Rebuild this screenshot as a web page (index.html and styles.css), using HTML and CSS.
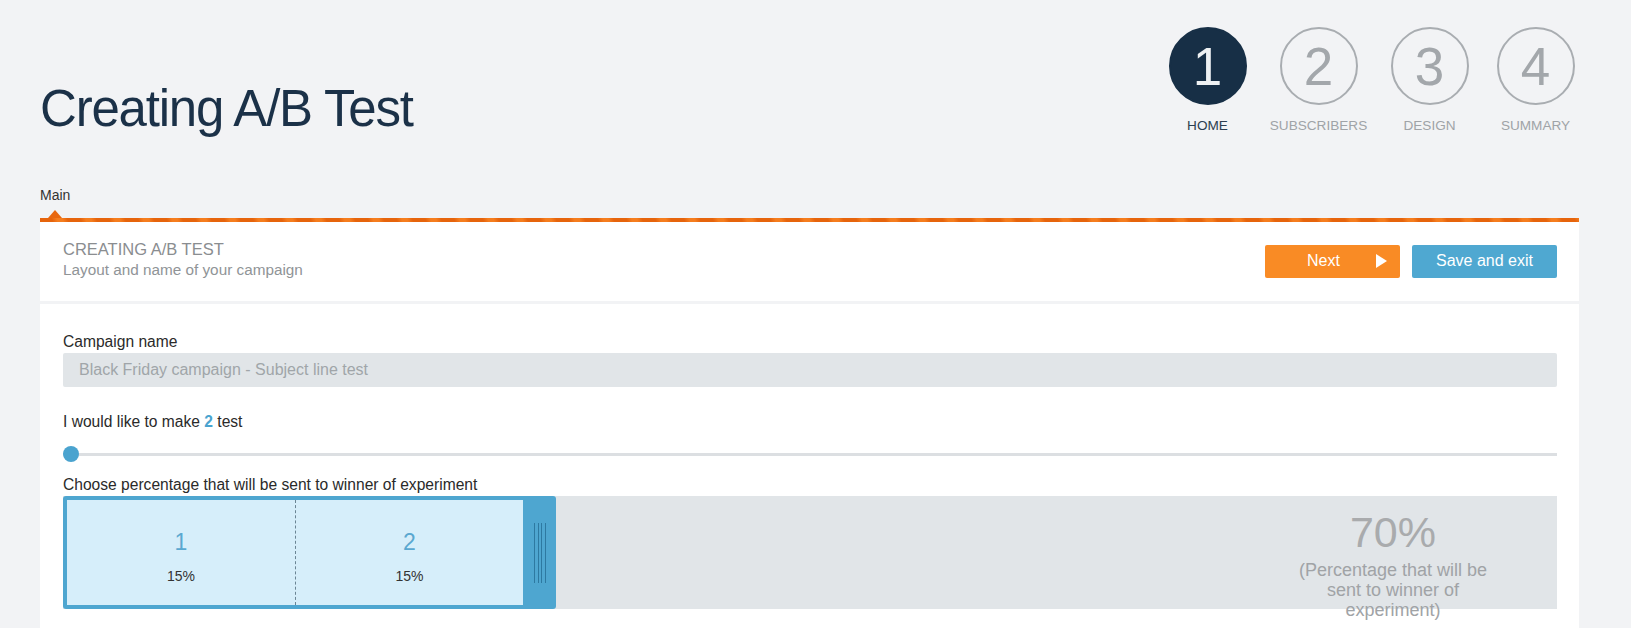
FILE: index.html
```html
<!DOCTYPE html>
<html lang="en">
<head>
  <meta charset="UTF-8" />
  <meta name="viewport" content="width=device-width, initial-scale=1.0"/>
  <title>Creating A/B Test</title>
  <link rel="stylesheet" href="styles.css">
</head>
<body>
  <div class="page">
    <header class="top">
      <h1 class="title">Creating A/B Test</h1>
      <ol class="steps">
        <li class="step active">
          <span class="step-num">1</span>
          <span class="step-label">HOME</span>
        </li>
        <li class="step">
          <span class="step-num">2</span>
          <span class="step-label">SUBSCRIBERS</span>
        </li>
        <li class="step">
          <span class="step-num">3</span>
          <span class="step-label">DESIGN</span>
        </li>
        <li class="step">
          <span class="step-num">4</span>
          <span class="step-label">SUMMARY</span>
        </li>
      </ol>
    </header>

    <nav class="tabs">
      <span class="tab active">Main</span>
    </nav>
    <div class="stripe"></div>

    <section class="card-head">
      <div class="head-text">
        <h2>CREATING A/B TEST</h2>
        <p>Layout and name of your campaign</p>
      </div>
      <div class="actions">
        <button class="btn btn-next" type="button">Next <span class="arrow"></span></button>
        <button class="btn btn-save" type="button">Save and exit</button>
      </div>
    </section>

    <section class="card-body">
      <div class="field">
        <label for="campaignName">Campaign name</label>
        <input type="text" id="campaignName" placeholder="Black Friday campaign - Subject line test" />
      </div>

      <div class="field">
        <label>I would like to make <b class="count">2</b> test</label>
        <div class="slider">
          <span class="slider-thumb"></span>
        </div>
      </div>

      <div class="field">
        <label>Choose percentage that will be sent to winner of experiment</label>
        <div class="split">
          <div class="split-tests">
            <div class="segment">
              <span class="seg-num">1</span>
              <span class="seg-pct">15%</span>
            </div>
            <div class="segment">
              <span class="seg-num">2</span>
              <span class="seg-pct">15%</span>
            </div>
            <div class="handle"><span class="grip"></span></div>
          </div>
          <div class="split-rest">
            <div class="rest-label">
              <div class="rest-pct">70%</div>
              <div class="rest-note">(Percentage that will be sent to winner of experiment)</div>
            </div>
          </div>
        </div>
      </div>
    </section>
  </div>
</body>
</html>
```
FILE: styles.css
```css
body {
  margin: 0;
  font-family: 'Liberation Sans', Arial, Helvetica, sans-serif;
  background: #f2f3f5;
  color: #333;
}

.page {
  width: 1539px;
  padding-left: 40px;
}

.top {
  display: flex;
  justify-content: space-between;
  align-items: flex-start;
  padding-top: 27px;
}

.title {
  margin: 53px 0 0;
  font-size: 51px;
  line-height: 58px;
  font-weight: normal;
  letter-spacing: -1.2px;
  color: #1b3148;
}

.steps {
  display: flex;
  margin: 0 -7px 0 0;
  padding: 0;
  list-style: none;
}

.step {
  display: flex;
  flex-direction: column;
  align-items: center;
  width: 111px;
}

.step:last-child {
  width: 101px;
}

.step-num {
  display: flex;
  align-items: center;
  justify-content: center;
  width: 78px;
  height: 78px;
  box-sizing: border-box;
  border: 2px solid #a9adb1;
  border-radius: 50%;
  font-size: 53px;
  color: #a3a7ab;
}

.step.active .step-num {
  background: #172f46;
  border-color: #172f46;
  color: #eef1f3;
}

.step-label {
  margin-top: 13px;
  font-size: 13.6px;
  line-height: 15px;
  white-space: nowrap;
  color: #9fa3a7;
}

.step.active .step-label {
  color: #2c3e50;
}

.tabs {
  margin-top: 49px;
  display: flex;
}

.tab {
  position: relative;
  padding-bottom: 15px;
  font-size: 14px;
  line-height: 16px;
  color: #333;
}

.tab.active::after {
  content: '';
  position: absolute;
  left: 8px;
  bottom: 0;
  border-left: 7px solid transparent;
  border-right: 7px solid transparent;
  border-bottom: 8px solid #e8670f;
}

.stripe {
  height: 4px;
  background: repeating-linear-gradient(70deg, #e6640c 0, #e6640c 12px, #f57d1e 17px, #f57d1e 22px, #e6640c 27px);
}

.card-head {
  display: flex;
  justify-content: space-between;
  align-items: center;
  background: #fff;
  padding: 17px 22px 22px 23px;
}

.head-text h2 {
  margin: 0;
  font-size: 16.5px;
  line-height: 20px;
  font-weight: normal;
  color: #8a8d90;
}

.head-text p {
  margin: 2px 0 0;
  font-size: 15.3px;
  line-height: 18px;
  color: #909497;
}

.actions {
  display: flex;
  gap: 12px;
  margin-top: 4px;
}

.btn {
  height: 33px;
  border: none;
  border-radius: 2px;
  font-family: inherit;
  font-size: 16px;
  color: #fff;
  cursor: pointer;
}

.btn-next {
  display: flex;
  align-items: center;
  width: 135px;
  padding-left: 42px;
  background: #f98b25;
}

.btn-next .arrow {
  margin-left: 36px;
  border-left: 11px solid #fff;
  border-top: 7px solid transparent;
  border-bottom: 7px solid transparent;
}

.btn-save {
  width: 145px;
  background: #4fa8d1;
}

.card-body {
  margin-top: 3px;
  background: #fff;
  padding: 29px 22px 40px 23px;
}

.field + .field {
  margin-top: 26px;
}

.field:last-child {
  margin-top: 14px;
}

.field label {
  display: block;
  font-size: 15.6px;
  line-height: 18px;
  color: #2a2a2a;
  margin-bottom: 2px;
}

.count {
  color: #4aa3cf;
}

.field input {
  display: block;
  width: 100%;
  height: 34px;
  box-sizing: border-box;
  padding: 0 16px;
  border: none;
  border-radius: 2px;
  background: #e1e5e8;
  font-family: inherit;
  font-size: 16px;
  color: #333;
}

.field input::placeholder {
  color: #a0a5a9;
}

.slider {
  position: relative;
  margin-top: 15px;
  height: 16px;
  display: flex;
  align-items: center;
}

.slider::before {
  content: '';
  flex: 1;
  height: 3px;
  background: #dcdfe2;
}

.slider-thumb {
  position: absolute;
  left: 0;
  top: 0;
  width: 16px;
  height: 16px;
  border-radius: 50%;
  background: #4aa3cf;
}

.split {
  display: flex;
  height: 113px;
  margin-top: 2px;
  background: #e1e5e8;
}

.split-tests {
  display: flex;
  padding: 4px 0 4px 4px;
  background: #4ea6d0;
  border-radius: 3px;
}

.segment {
  display: flex;
  flex-direction: column;
  align-items: center;
  width: 228px;
  box-sizing: border-box;
  padding-top: 29px;
  background: #d6eefa;
}

.segment + .segment {
  border-left: 1px dashed #6b8594;
}

.seg-num {
  font-size: 23px;
  line-height: 26px;
  color: #5aa8d0;
}

.seg-pct {
  margin-top: 13px;
  font-size: 14px;
  line-height: 16px;
  color: #333;
}

.handle {
  display: flex;
  align-items: center;
  justify-content: center;
  width: 33px;
}

.grip {
  width: 12px;
  height: 60px;
  background: repeating-linear-gradient(90deg, #2d79a1 0 1px, transparent 1px 3.6px);
}

.split-rest {
  flex: 1;
  display: flex;
  justify-content: flex-end;
  padding-right: 64px;
}

.rest-label {
  width: 200px;
  padding-top: 12px;
  text-align: center;
}

.rest-pct {
  font-size: 43px;
  line-height: 48px;
  color: #a9abad;
}

.rest-note {
  margin-top: 4px;
  font-size: 18px;
  line-height: 20px;
  color: #a0a3a6;
}
```
